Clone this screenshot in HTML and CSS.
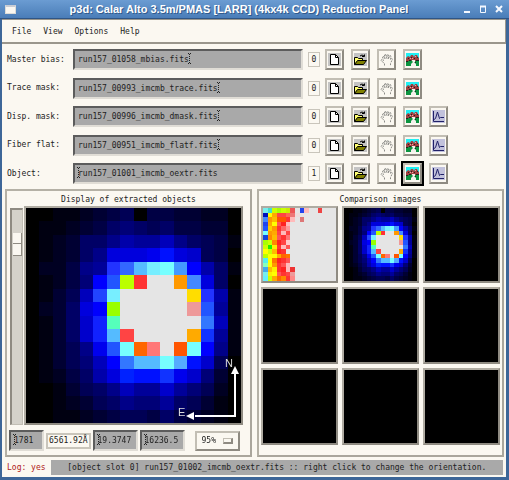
FILE: index.html
```html
<!DOCTYPE html>
<html lang="en">
<head>
    <meta charset="utf-8">
    <title>p3d: Reduction Panel</title>
    <link rel="stylesheet" href="styles.css">
</head>

<body>
    <!-- toolbar icons, 13x13 -->
    <svg class="symbols" aria-hidden="true">
        <symbol id="i-new" viewBox="0 0 13 13">
            <path fill="#c4c4c4" d="M0 0h13v13H0z"/>
            <path fill="#fff" stroke="#000" d="M2.500 1.500h5l3 3v7h-8z"/>
            <path fill="none" stroke="#000" d="M7.500 1.500v3h3"/>
        </symbol>
        <symbol id="i-open" viewBox="0 0 13 13">
            <path fill="#c4c4c4" d="M0 0h13v13H0z"/>
            <path fill="none" stroke="#000" d="M6 3q2-2 4 0M10.500 1.500v2h-2.500"/>
            <path fill="#ffff70" stroke="#000" d="M.5 11.500v-7h3l1 1h4v2h-4l-3 4"/>
            <path fill="#808000" stroke="#000" d="M.5 11.500l3-4h9l-3 4z"/>
        </symbol>
        <symbol id="i-hand" viewBox="0 0 13 13">
            <path fill="none" stroke="#8c8c88" stroke-dasharray="2 1" d="M4.500 12.500v-2L1 7.500l.5-1 2 1L2.500 4l1-1L5 6 4.500 2l1-1L7 5.500V1.500l1.500.5v4l1-3.500 1.500.5-.5 3.500 1-1 1 .5-2 4.500v2"/>
        </symbol>
        <symbol id="i-image" viewBox="0 0 13 13">
            <path fill="#20f0f4" d="M0 0h13v7H0z"/>
            <path fill="#0b9440" d="M0 7h13v6H0z"/>
            <path fill="#a04040" d="M0 8V5l2-2 2 1 1-2h2l1 2 1-2h2l1 2 1 1v3H9L7 7 4 8z"/>
            <path fill="#222" d="M2 5h1v1H2zM5 4h1v1H5zM8 5h1v1H8zM11 4h1v1h-1zM3 7h2v1H3zM0 8h2v1H0zM10 7h3v1h-3zM9 9h1v1H9z"/>
            <path fill="#f2a0a0" d="M4 5h1v1H4zM9 3h1v1H9zM6 5h1v1H6z"/>
            <path fill="#f4f0ec" d="M6 7h3v2H8l2 2v2H5v-2l2-2-1-1z"/>
        </symbol>
        <symbol id="i-plot" viewBox="0 0 13 13">
            <path fill="#c2c2dc" d="M0 0h13v13H0z"/>
            <path fill="none" stroke="#202068" d="M1.500 1v10.500H12"/>
            <path fill="none" stroke="#202068" d="M2 9.500l1.500-1L5.500 2l2 6.500 1-1H12"/>
        </symbol>
        <symbol id="i-beam" viewBox="0 0 3 11">
            <path fill="#222" d="M0 0h1v1H0zM2 0h1v1H2zM1 1h1v1H1zM1 3h1v1H1zM1 5h1v1H1zM1 7h1v1H1zM1 9h1v1H1zM0 10h1v1H0zM2 10h1v1H2z"/>
        </symbol>
    </svg>

    <div class="window">
        <header class="titlebar">
            <span class="winmenu"></span>
            <h1>p3d: Calar Alto 3.5m/PMAS [LARR] (4kx4k CCD) Reduction Panel</h1>
            <svg class="winbuttons" viewBox="0 0 42 10" aria-hidden="true">
                <path fill="none" stroke="#f4f8ff" stroke-width="2" d="M2 8h6M18 2.500h6"/>
                <path fill="none" stroke="#f4f8ff" d="M18.500 2v6.500h5V2"/>
                <path stroke="#f4f8ff" stroke-width="2" d="M34 2l6 6M40 2l-6 6"/>
            </svg>
        </header>

        <nav class="menubar">
            <button type="button">File</button>
            <button type="button">View</button>
            <button type="button">Options</button>
            <button type="button">Help</button>
        </nav>

        <section class="files">
            <div class="file">
                <label for="mbias">Master bias:</label>
                <span class="field"><input type="text" id="mbias" value="run157_01058_mbias.fits"><svg class="beam" style="--col: 23"><use href="#i-beam"/></svg></span>
                <output class="count">0</output>
                <button type="button" class="tool" aria-label="New"><svg><use href="#i-new"/></svg></button>
                <button type="button" class="tool" aria-label="Open"><svg><use href="#i-open"/></svg></button>
                <button type="button" class="tool" aria-label="Grab" disabled><svg><use href="#i-hand"/></svg></button>
                <button type="button" class="tool" aria-label="Show image"><svg><use href="#i-image"/></svg></button>
            </div>
            <div class="file">
                <label for="trace">Trace mask:</label>
                <span class="field"><input type="text" id="trace" value="run157_00993_imcmb_trace.fits"><svg class="beam" style="--col: 29"><use href="#i-beam"/></svg></span>
                <output class="count">0</output>
                <button type="button" class="tool" aria-label="New"><svg><use href="#i-new"/></svg></button>
                <button type="button" class="tool" aria-label="Open"><svg><use href="#i-open"/></svg></button>
                <button type="button" class="tool" aria-label="Grab" disabled><svg><use href="#i-hand"/></svg></button>
                <button type="button" class="tool" aria-label="Show image"><svg><use href="#i-image"/></svg></button>
            </div>
            <div class="file">
                <label for="dmask">Disp. mask:</label>
                <span class="field"><input type="text" id="dmask" value="run157_00996_imcmb_dmask.fits"><svg class="beam" style="--col: 29"><use href="#i-beam"/></svg></span>
                <output class="count">0</output>
                <button type="button" class="tool" aria-label="New"><svg><use href="#i-new"/></svg></button>
                <button type="button" class="tool" aria-label="Open"><svg><use href="#i-open"/></svg></button>
                <button type="button" class="tool" aria-label="Grab" disabled><svg><use href="#i-hand"/></svg></button>
                <button type="button" class="tool" aria-label="Show image"><svg><use href="#i-image"/></svg></button>
                <button type="button" class="tool" aria-label="Plot"><svg><use href="#i-plot"/></svg></button>
            </div>
            <div class="file">
                <label for="flatf">Fiber flat:</label>
                <span class="field"><input type="text" id="flatf" value="run157_00951_imcmb_flatf.fits"><svg class="beam" style="--col: 29"><use href="#i-beam"/></svg></span>
                <output class="count">0</output>
                <button type="button" class="tool" aria-label="New"><svg><use href="#i-new"/></svg></button>
                <button type="button" class="tool" aria-label="Open"><svg><use href="#i-open"/></svg></button>
                <button type="button" class="tool" aria-label="Grab" disabled><svg><use href="#i-hand"/></svg></button>
                <button type="button" class="tool" aria-label="Show image"><svg><use href="#i-image"/></svg></button>
                <button type="button" class="tool" aria-label="Plot"><svg><use href="#i-plot"/></svg></button>
            </div>
            <div class="file">
                <label for="object">Object:</label>
                <span class="field"><input type="text" id="object" value="run157_01001_imcmb_oextr.fits"><svg class="beam" style="--col: 0"><use href="#i-beam"/></svg></span>
                <output class="count">1</output>
                <button type="button" class="tool" aria-label="New"><svg><use href="#i-new"/></svg></button>
                <button type="button" class="tool" aria-label="Open"><svg><use href="#i-open"/></svg></button>
                <button type="button" class="tool" aria-label="Grab" disabled><svg><use href="#i-hand"/></svg></button>
                <button type="button" class="tool active" aria-label="Show image"><svg><use href="#i-image"/></svg></button>
                <button type="button" class="tool" aria-label="Plot"><svg><use href="#i-plot"/></svg></button>
            </div>
        </section>

        <main class="panels">
            <section class="panel">
                <h2>Display of extracted objects</h2>
                <div class="display">
                    <input type="range" class="slider" aria-label="Wavelength" min="0" max="100" value="12">
                    <div class="frame">
                        <canvas data-map="object" width="16" height="16"></canvas>
                        <svg class="compass" viewBox="0 0 64 64">
                            <path fill="none" stroke="#fff" stroke-width="2" d="M58 14v43H18"/>
                            <path fill="#fff" d="M58 7l4 8h-8zM9 57l8-4v8z"/>
                            <text x="48" y="8">N</text>
                            <text x="1" y="57">E</text>
                        </svg>
                    </div>
                </div>
                <div class="readout">
                    <span class="field"><input type="text" aria-label="Channel" value="1781"><svg class="beam" style="--col: 0"><use href="#i-beam"/></svg></span>
                    <output class="lambda">6561.92Å</output>
                    <span class="field wide"><input type="text" aria-label="Low cut" value="19.3747"><svg class="beam" style="--col: 0"><use href="#i-beam"/></svg></span>
                    <span class="field wide"><input type="text" aria-label="High cut" value="16236.5"><svg class="beam" style="--col: 0"><use href="#i-beam"/></svg></span>
                    <span class="percent">
                        <select aria-label="Cut level"><option>95%</option><option>99%</option></select>
                    </span>
                </div>
            </section>

            <section class="panel">
                <h2>Comparison images</h2>
                <div class="thumbs">
                    <div class="frame"><canvas data-map="flat" width="16" height="16"></canvas></div>
                    <div class="frame"><canvas data-map="object" width="16" height="16"></canvas></div>
                    <div class="frame"></div>
                    <div class="frame"></div>
                    <div class="frame"></div>
                    <div class="frame"></div>
                    <div class="frame"></div>
                    <div class="frame"></div>
                    <div class="frame"></div>
                </div>
            </section>
        </main>

        <footer class="log">
            <span class="logflag">Log: yes</span>
            <output class="status">[object slot 0] run157_01002_imcmb_oextr.fits :: right click to change the orientation.</output>
        </footer>
    </div>
    <script src="maps.js"></script>
</body>
</html>
```
FILE: styles.css
```css
*, *::after {
    box-sizing: border-box;
}

body {
    margin: 0;
    background: #fbf8f1;
    color: #222;
    font: 8px/12px "DejaVu Sans Mono", monospace;
}

input, select, button {
    font: inherit;
    color: inherit;
    border-radius: 0;
    margin: 0;
}

h1, h2 {
    margin: 0;
    font-weight: normal;
}

.symbols {
    display: none;
}

.window {
    min-height: 100vh;
    border: solid #3d6698;
    border-width: 0 3px 3px 2px;
    background: #fbf8f1;
}

/* title bar */
.titlebar {
    display: flex;
    align-items: center;
    height: 19px;
    margin: 0 -3px 0 -2px;
    padding: 0 5px;
    border-bottom: 1px solid #2f5585;
    background: linear-gradient(#6b9cd2, #4a7db8);
}

    .titlebar h1 {
        flex: 1;
        text-align: center;
        color: #fff;
        font: bold 11px/18px "Liberation Sans", Arial, sans-serif;
        text-shadow: 1px 1px 0 #315a8c;
        white-space: nowrap;
    }

.winmenu {
    width: 11px;
    height: 9px;
    border: 1px solid #dcdcd8;
    border-top: 2px solid #c8ccd4;
    background: #fbf8f1;
}

.winbuttons {
    width: 42px;
    height: 10px;
}

.menubar {
    display: flex;
    gap: 12px;
    height: 25px;
    padding: 1px 10px 0;
    border: solid #9a968c;
    border-width: 1px 1px 2px 0;
}

    .menubar button {
        padding: 0;
        border: 0;
        background: none;
    }

/* file rows */
.files {
    display: grid;
    align-content: space-between;
    height: 135px;
    margin: 5px 56px 5px 5px;
}

.file {
    display: grid;
    grid-template-columns: 66px 1fr 12px repeat(5, 21px);
    column-gap: 5px;
    align-items: center;
    height: 21px;
}

    .file .field {
        margin-left: -5px;
    }

.field {
    position: relative;
    display: block;
    height: 21px;
}

    .field input {
        display: block;
        width: 100%;
        height: 100%;
        padding: 0 0 0 3px;
        background: #a9a9a9;
        border: solid;
        border-width: 2px;
        border-color: #5c5c5c #e0ddd6 #e0ddd6 #5c5c5c;
        outline: none;
    }

.beam {
    position: absolute;
    top: 4px;
    left: calc(4px + var(--col) * 1ch);
    width: 3px;
    height: 11px;
}

.count {
    height: 15px;
    border: 1px solid #c9c5bb;
    line-height: 13px;
    text-align: center;
}

.tool {
    width: 19px;
    height: 21px;
    padding: 2px 1px;
    border: solid;
    border-width: 2px;
    border-color: #c2beb4 #8f8b82 #8f8b82 #c2beb4;
    background: #fbf8f1;
}

    .tool svg {
        display: block;
        width: 13px;
        height: 13px;
    }

    .tool.active {
        outline: 2px solid #000;
    }

/* image panels */
.panels {
    display: grid;
    grid-template-columns: 1fr 1fr;
    gap: 5px;
    padding: 0 2px 0 3px;
}

.panel {
    height: 268px;
    padding: 3px 2px 0 2px;
    border: 2px solid;
    border-color: #b5b1a6 #aaa69c #aaa69c #b5b1a6;
}

    .panel h2 {
        font-size: 8px;
        line-height: 12px;
        text-align: center;
    }

.display {
    display: flex;
    gap: 1px;
    height: 219px;
    padding-right: 5px;
}

.slider {
    appearance: none;
    writing-mode: vertical-lr;
    width: 13px;
    height: 217px;
    margin: 2px 0 0 1px;
    background: #d5d2ca;
    border: solid;
    border-width: 2px 1px 1px 2px;
    border-color: #8f8b82 #c2beb4 #c2beb4 #8f8b82;
}

    .slider::-webkit-slider-thumb {
        appearance: none;
        width: 9px;
        height: 23px;
        border: solid #8f8b82;
        border-width: 0 1px 1px 0;
        background: linear-gradient(#fbf8f1 10px, #8f8b82 10px, #8f8b82 11px, #fbf8f1 11px);
    }

.frame {
    position: relative;
    border: 2px solid;
    border-color: #b0aca2 #8f8b82 #8f8b82 #b0aca2;
    background: #000;
}

    .frame canvas {
        display: block;
        width: 100%;
        height: 100%;
        image-rendering: pixelated;
    }

.display .frame {
    flex: 1;
}

.compass {
    position: absolute;
    right: 0;
    bottom: 0;
    width: 64px;
    height: 64px;
}

    .compass text {
        fill: #ddd;
        font: 11px "Liberation Sans", Arial, sans-serif;
    }

.readout {
    display: flex;
    align-items: center;
    gap: 2px;
    height: 21px;
    margin-top: 5px;
}

    .readout .field {
        width: 35px;
    }

    .readout .field.wide {
        width: 45px;
    }

.lambda {
    height: 16px;
    padding: 0 1px;
    border: 2px solid #c9c5bb;
    line-height: 12px;
}

.percent {
    position: relative;
    margin-left: 8px;
}

    .percent select {
        appearance: none;
        display: block;
        width: 45px;
        height: 20px;
        padding: 0 5px;
        border: 2px solid;
        border-color: #c2beb4 #8f8b82 #8f8b82 #c2beb4;
        background: #fbf8f1;
    }

    .percent::after {
        content: "";
        position: absolute;
        top: 7px;
        right: 7px;
        width: 10px;
        height: 6px;
        border: solid;
        border-width: 1px 2px 2px 1px;
        border-color: #c2beb4 #8f8b82 #8f8b82 #c2beb4;
    }

.thumbs {
    display: grid;
    grid-template-columns: repeat(3, 1fr);
    gap: 4px;
}

    .thumbs .frame {
        aspect-ratio: 1;
    }

/* log line */
.log {
    display: flex;
    align-items: center;
    gap: 5px;
    margin: 3px 3px 0 5px;
}

.logflag {
    color: #b01818;
}

.status {
    flex: 1;
    height: 15px;
    background: #a9a9a9;
    line-height: 15px;
    text-align: center;
    white-space: nowrap;
}
```
FILE: maps.js
```js
// one #rgb triple per spaxel, 16 per row
var maps = {
    object: [
        "000 000 001 001 002 003 004 005 000 004 004 003 003 002 002 000",
        "000 001 001 002 003 004 006 007 006 005 006 004 004 003 003 000",
        "000 001 002 003 006 006 008 00a 009 009 00b 008 006 005 004 001",
        "000 001 002 003 006 008 00d 00d 00d 00e 01f 00d 00c 005 004 000",
        "000 002 002 004 008 009 23f 36f 5bf 7ef 7ff 49f 00f 00a 006 001",
        "000 001 002 004 007 00f 25f bf0 f33 eee eee f90 48f 00d 006 000",
        "000 001 003 005 00b 24f 7ef eee eee eee eee eee fd0 23f 00a 001",
        "000 002 003 006 00d 00f 9f0 eee eee eee eee eee e99 25f 009 001",
        "000 001 003 006 00c 12f 5fb eee eee eee eee eee eee 37f 00b 001",
        "000 001 003 006 00c 12f 5bf f44 eee eee eee eee fa0 13f 009 001",
        "000 001 003 005 008 00e 25f 7ff f60 f77 eee f50 7ff 00f 008 001",
        "000 001 003 005 007 00b 00f 37f 5bf 5bf 7ff 5af 01f 00c 005 000",
        "000 001 002 004 006 00a 00d 02f 01f 01f 13f 00e 00c 007 003 000",
        "000 000 001 003 005 006 008 00b 009 009 00c 009 007 005 002 000",
        "000 000 001 002 003 005 006 008 007 007 009 006 005 003 001 000",
        "000 000 001 001 002 003 004 005 005 004 006 004 003 002 001 000"
    ],
    flat: [
        "7ee 4dc cf0 af0 cf0 ce0 e55 eee 24e fbb eee eee e44 eee eee eee",
        "01b ff0 fa0 f44 f44 f65 e77 edd eee eee eee eee eee eee eee eee",
        "48f f90 fb0 f50 f50 f33 fbb eee d77 eee eee eee eee eee eee eee",
        "24e fa0 ff0 f55 f22 fbb eee eee eee eee eee eee eee eee eee eee",
        "25f fc0 f90 f33 f66 f99 eee eee eee eee eee eee eee eee eee eee",
        "7ff f90 fa0 f44 fbb f44 eee eee eee eee eee eee eee eee eee eee",
        "14d f80 fb0 f55 f33 f77 eee eee eee eee eee eee eee eee eee eee",
        "af0 cf0 f80 f22 f44 fcc eee eee eee eee eee eee eee eee eee eee",
        "cf0 2e0 fe0 f33 fbb f55 eee eee eee eee eee eee eee eee eee eee",
        "ff0 cf0 fb0 f22 f33 eee eee eee eee eee eee eee eee eee eee eee",
        "bf0 ff0 ff0 fa0 f60 f70 eee eee eee eee eee eee eee eee eee eee",
        "5ee ff0 f70 f22 f33 f55 eee eee eee eee eee eee eee eee eee eee",
        "8fb ff0 f90 f33 f55 fbb eee eee eee eee eee eee eee eee eee eee",
        "4ae fb0 fe0 f33 f22 fbb e33 eee eee eee eee eee eee eee eee eee",
        "7ee fe0 ff0 f55 f33 f44 e99 eee eee eee eee eee eee eee eee eee",
        "6ef cf0 fa0 f60 f80 f33 f88 eee eee eee eee eee eee eee eee eee"
    ]
};

document.querySelectorAll("canvas[data-map]").forEach(function (canvas) {
    var ctx = canvas.getContext("2d");
    maps[canvas.dataset.map].forEach(function (row, y) {
        row.split(" ").forEach(function (rgb, x) {
            ctx.fillStyle = rgb === "eee" ? "#e5e5e5" : "#" + rgb;
            ctx.fillRect(x, y, 1, 1);
        });
    });
});
```
